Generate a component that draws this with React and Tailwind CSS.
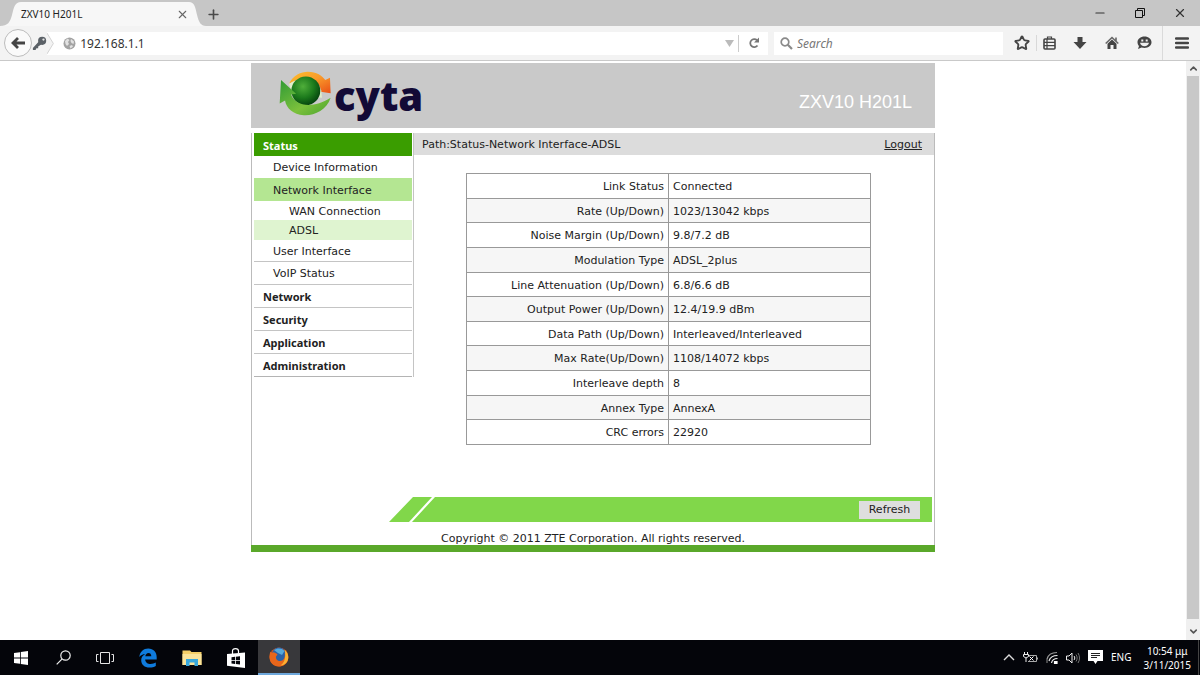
import { ChevronDown, ChevronUp, Minus, Plus, Search, Star, X } from 'lucide-react'
import { useState } from 'react'

const menu = [
  { label: 'Status', className: "h-[23px] bg-[#3a9d00] pl-[9px] font-['Noto_Sans'] font-bold text-white" },
  { label: 'Device Information', className: 'h-[22px] pl-[19px]' },
  { label: 'Network Interface', className: 'h-[23px] bg-[#b4e692] pl-[19px]' },
  { label: 'WAN Connection', className: 'h-[19px] pl-[35px]' },
  { label: 'ADSL', className: 'h-5 bg-[#dff4d0] pl-[35px]' },
  { label: 'User Interface', className: 'h-[22px] border-b border-[#c4c4c4] pl-[19px]' },
  { label: 'VoIP Status', className: 'h-[23px] border-b border-[#c4c4c4] pl-[19px]' },
  { label: 'Network', className: "h-[23px] border-b border-[#c4c4c4] pl-[9px] font-['Noto_Sans'] font-bold" },
  { label: 'Security', className: "h-[23px] border-b border-[#c4c4c4] pl-[9px] font-['Noto_Sans'] font-bold" },
  { label: 'Application', className: "h-[23px] border-b border-[#c4c4c4] pl-[9px] font-['Noto_Sans'] font-bold" },
  { label: 'Administration', className: "h-[23px] border-b border-[#b4b4b4] pl-[9px] font-['Noto_Sans'] font-bold" },
]

const stats = [
  ['Link Status', 'Connected'],
  ['Rate (Up/Down)', '1023/13042 kbps'],
  ['Noise Margin (Up/Down)', '9.8/7.2 dB'],
  ['Modulation Type', 'ADSL_2plus'],
  ['Line Attenuation (Up/Down)', '6.8/6.6 dB'],
  ['Output Power (Up/Down)', '12.4/19.9 dBm'],
  ['Data Path (Up/Down)', 'Interleaved/Interleaved'],
  ['Max Rate(Up/Down)', '1108/14072 kbps'],
  ['Interleave depth', '8'],
  ['Annex Type', 'AnnexA'],
  ['CRC errors', '22920'],
]

function TabBar() {
  return (
    <header className="flex h-[26px] items-end bg-[#c6c6c6] text-[#333]">
      <div className="flex h-6 items-end">
        <svg width="21" height="24" viewBox="0 0 21 24" fill="#f7f7f7">
          <path d="M0 24C8 24 10 20 12 13C14 5 15 0 21 0V24Z" />
        </svg>
        <div className="flex h-6 w-[168px] items-center justify-between bg-[#f7f7f7]">
          <span className="text-[10px] text-[#222]">ZXV10 H201L</span>
          <button type="button" aria-label="Close tab">
            <X size={13} strokeWidth={2} className="text-[#666]" />
          </button>
        </div>
        <svg width="17" height="24" viewBox="0 0 19 24" fill="#f7f7f7" preserveAspectRatio="none">
          <path d="M0 0C6 0 7 5 9 13C11 20 13 24 19 24H0Z" />
        </svg>
      </div>
      <button type="button" aria-label="New tab" className="flex h-6 items-center">
        <Plus size={15} strokeWidth={2.6} className="text-[#4a4a4a]" />
      </button>
      <div className="ml-auto flex h-[26px] items-center">
        <button type="button" aria-label="Minimize" className="flex w-10 justify-center">
          <Minus size={14} strokeWidth={2} />
        </button>
        <button type="button" aria-label="Restore" className="flex w-10 justify-center">
          <svg width="10" height="10" viewBox="0 0 10 10" fill="none" stroke="#111">
            <path d="M.5 2.5h7v7h-7zM2.5 2.5v-2h7v7h-2" />
          </svg>
        </button>
        <button type="button" aria-label="Close window" className="flex w-10 justify-center">
          <X size={14} strokeWidth={2} />
        </button>
      </div>
    </header>
  )
}

function KeyIcon() {
  return (
    <svg width="15" height="17" viewBox="0 0 17 17">
      <path d="M7.500 6.500L1 13.500V16H4L5 14H7V12L10.500 9.500Z" fill="#5b6167" />
      <ellipse cx="11.500" cy="5.500" rx="4.600" ry="4.600" fill="#5b6167" />
      <circle cx="13" cy="4" r="1.300" fill="#e5e5e5" />
    </svg>
  )
}

function GlobeIcon() {
  return (
    <svg width="13" height="13" viewBox="0 0 13 13">
      <circle cx="6.500" cy="6.500" r="6" fill="#a3a3a3" />
      <path
        d="M2 4L4.500 1.500L6.500 3L5 5L6 7L4 9L2.500 7ZM8 2L11 4.500L10.500 7L8.500 6L7.500 4ZM6.500 9L9 8L10 9.500L7.500 11.500Z"
        fill="#e2e2e2"
      />
    </svg>
  )
}

function ToolBar() {
  const [url, setUrl] = useState('192.168.1.1')
  const [query, setQuery] = useState('')

  return (
    <div className="flex h-[35px] items-center border-b border-[#c9c9c9] bg-[#f3f3f3] pl-1 text-[#444]">
      <button
        type="button"
        aria-label="Back"
        className="z-10 flex h-7 w-7 items-center justify-center rounded-full border border-[#bcbcbc] bg-[#fafafa]"
      >
        <svg width="14" height="12" viewBox="0 0 14 12" fill="none" stroke="#444" strokeWidth="2.800">
          <path d="M7 1L2 6L7 11M2 6H14" />
        </svg>
      </button>
      <div className="-ml-2 flex h-[23px] flex-1 items-center bg-white">
        <div className="flex h-full items-center bg-[#f3f3f3] pl-2">
          <KeyIcon />
        </div>
        <svg width="9" height="23" viewBox="0 0 9 23" fill="#f3f3f3" stroke="#cfcfcf">
          <path d="M0 0L7 11.500L0 23" />
        </svg>
        <div className="ml-1 flex w-full min-w-0 items-center gap-1 pl-1">
          <GlobeIcon />
          <input
            aria-label="Address"
            className="min-w-0 flex-1 bg-transparent pt-px text-xs text-[#333] outline-none"
            value={url}
            onChange={(e) => setUrl(e.target.value)}
          />
          <button type="button" aria-label="Show history">
            <svg width="9" height="7" viewBox="0 0 9 7" fill="#bbb">
              <path d="M0 0H9L4.500 7Z" />
            </svg>
          </button>
        </div>
        <button
          type="button"
          aria-label="Reload"
          className="ml-1 flex h-[17px] w-[30px] shrink-0 items-center justify-center border-l border-[#ccc]"
        >
          <svg width="12" height="12" viewBox="0 0 12 12">
            <path d="M9.500 8.500A4 4 0 1 1 9 3.200" fill="none" stroke="#777" strokeWidth="1.800" />
            <path d="M11 .5V5.500H6Z" fill="#777" />
          </svg>
        </button>
      </div>
      <label className="ml-[6px] flex h-[23px] w-[229px] items-center gap-1 bg-white pl-[6px]">
        <svg width="13" height="13" viewBox="0 0 13 13" fill="none" stroke="#8a8a8a" className="shrink-0">
          <circle cx="5" cy="5" r="3.800" strokeWidth="1.700" />
          <path d="M7.800 7.800L12 12" strokeWidth="2.200" />
        </svg>
        <input
          aria-label="Search"
          className="w-full bg-transparent pt-px text-xs italic outline-none placeholder:text-[#777]"
          placeholder="Search"
          value={query}
          onChange={(e) => setQuery(e.target.value)}
        />
      </label>
      <div className="flex h-full items-center pl-[11px]">
        <button type="button" aria-label="Bookmark" className="flex w-[23px] border-r border-[#d8d8d8]">
          <Star size={16} strokeWidth={2.800} />
        </button>
        <button type="button" aria-label="Bookmarks list" className="flex w-[27px] pl-[6px]">
          <svg width="13" height="14" viewBox="0 0 13 14" fill="none" stroke="#444" strokeWidth="1.600">
            <rect x="1" y="3" width="11" height="10" rx="1" />
            <path d="M4.500 3V1H8.500V3M1 6.400H12M1 9.600H12M4 3V13" strokeWidth="1.200" />
          </svg>
        </button>
        <button type="button" aria-label="Downloads" className="flex w-8 justify-center">
          <svg width="14" height="14" viewBox="0 0 14 14" fill="#444">
            <path d="M4.500 1H9.500V6H13.500L7 13L.5 6H4.500Z" />
          </svg>
        </button>
        <button type="button" aria-label="Home" className="flex w-8 justify-center">
          <svg width="14" height="14" viewBox="0 0 14 14">
            <path d="M.7 7.500L7 1.500L13.300 7.500M11 1.500V5" fill="none" stroke="#666" strokeWidth="1.600" />
            <path d="M2.500 7.800L7 3.600L11.500 7.800V13H8.500V9H5.500V13H2.500Z" fill="#444" />
          </svg>
        </button>
        <button type="button" aria-label="Chat" className="flex w-8 justify-center">
          <svg width="15" height="14" viewBox="0 0 15 14">
            <path d="M7.500 .5C11.500 .5 14.500 3 14.500 6.300S11.500 12 7.500 12C6.500 12 5.500 11.800 4.600 11.500L1 13L2 10C1 9 .5 7.700 .5 6.300C.5 3 3.500 .5 7.500 .5Z" fill="#444" />
            <path d="M4.300 3.400H6.300V5.400H4.300ZM8.700 3.400H10.700V5.400H8.700ZM3 6.800H12C11.500 9 9.800 10.200 7.500 10.200S3.500 9 3 6.800Z" fill="#eee" />
          </svg>
        </button>
        <button
          type="button"
          aria-label="Open menu"
          className="ml-[2px] flex h-full w-[38px] items-center justify-center border-l border-[#dadada]"
        >
          <svg width="14" height="12" viewBox="0 0 14 12" stroke="#444" strokeWidth="2.400" strokeLinecap="round">
            <path d="M1 1.500H13M1 6H13M1 10.500H13" />
          </svg>
        </button>
      </div>
    </div>
  )
}

function CytaLogo() {
  return (
    <div className="flex items-center">
      <svg width="57" height="47" viewBox="80 25 170 140" className="-mt-1">
        <defs>
          <radialGradient id="ball" cx="0.4" cy="0.35" r="0.65">
            <stop offset="0" stopColor="#4fae3a" />
            <stop offset="0.6" stopColor="#1c7a1c" />
            <stop offset="1" stopColor="#07480f" />
          </radialGradient>
          <linearGradient id="leaf" x1="0" y1="0" x2="1" y2="1">
            <stop offset="0" stopColor="#2f9a35" />
            <stop offset="0.6" stopColor="#7cc13c" />
            <stop offset="1" stopColor="#4aa32f" />
          </linearGradient>
          <linearGradient id="flame" x1="0" y1="0" x2="1" y2="1">
            <stop offset="0" stopColor="#fbc02d" />
            <stop offset="0.5" stopColor="#f99a2a" />
            <stop offset="1" stopColor="#ea4f16" />
          </linearGradient>
        </defs>
        <path d="M116 66C128 40 152 30 172 30C198 30 215 42 224 55L238 48L240 94L200 88L210 80C200 50 165 38 116 66Z" fill="url(#flame)" />
        <path d="M116 66C150 42 195 48 212 86L214 108L125 100Z" fill="#dfeecb" />
        <circle cx="166" cy="87" r="43" fill="url(#ball)" />
        <path d="M92 55L137 96L122 98C132 128 180 146 240 108C228 145 190 162 160 160C128 157 108 140 104 116L88 125Z" fill="url(#leaf)" />
      </svg>
      <span className="font-['Open_Sans'] text-[40px] leading-none font-extrabold text-[#120a36]">cyta</span>
    </div>
  )
}

function RouterPage() {
  return (
    <div className="mx-auto mt-[2px] w-[684px] font-['DejaVu_Sans',sans-serif] text-[11px] text-[#222]">
      <div className="flex h-[65px] items-center justify-between bg-[#c9c9c9] pr-[23px] pl-[26px]">
        <CytaLogo />
        <h1 className="pt-3 font-['Liberation_Sans',sans-serif] text-lg text-white">ZXV10 H201L</h1>
      </div>

      <div className="mt-[5px] border-x border-[#bbb]">
        <div className="flex items-start">
          <nav className="ml-[2px] w-40 border-r border-[#c4c4c4] pr-px">
            {menu.map((item) => (
              <a key={item.label} href="#" className={`flex items-center pt-[3px] ${item.className}`}>
                {item.label}
              </a>
            ))}
          </nav>

          <main className="flex-1">
            <div className="flex h-[22px] items-center justify-between bg-[#dcdcdc] pt-[2px] pr-3 pl-2">
              <span>Path:Status-Network Interface-ADSL</span>
              <a href="#" className="underline">
                Logout
              </a>
            </div>
            <table className="mt-[18px] ml-[52px] h-[272px] w-[405px] border-collapse">
              <tbody>
                {stats.map(([name, value]) => (
                  <tr key={name} className="even:bg-[#f6f6f6]">
                    <th className="w-1/2 border border-[#999] px-1 pt-[3px] pb-0 text-right font-normal" scope="row">
                      {name}
                    </th>
                    <td className="border border-[#999] px-1 pt-[3px] pb-0">{value}</td>
                  </tr>
                ))}
              </tbody>
            </table>
          </main>
        </div>

        <div className="mt-[52px] mr-[2px] ml-[137px] flex h-[25px]">
          <svg width="46" height="25" viewBox="0 0 46 25" fill="#81d74a">
            <path d="M24 0H43L20 25H0ZM46 0V25H23Z" />
          </svg>
          <div className="flex flex-1 items-center justify-end bg-[#81d74a] pr-3">
            <button type="button" className="flex h-[18px] w-[61px] items-center justify-center bg-[#dedede] pt-px">
              Refresh
            </button>
          </div>
        </div>

        <footer className="flex h-[23px] items-end justify-center leading-3">
          Copyright © 2011 ZTE Corporation. All rights reserved.
        </footer>
      </div>
      <div className="h-[7px] bg-[#5aa82a]" />
    </div>
  )
}

function ScrollBar() {
  return (
    <div className="flex w-[14px] flex-col items-center bg-[#f0f0f0] text-[#555]">
      <button type="button" aria-label="Scroll up" className="flex h-[15px] items-center">
        <ChevronUp size={11} strokeWidth={3.500} />
      </button>
      <div className="w-3 flex-1 bg-[#c8c8c8]" />
      <button type="button" aria-label="Scroll down" className="flex h-[21px] items-center pt-1">
        <ChevronDown size={11} strokeWidth={3.500} />
      </button>
    </div>
  )
}

function TaskBar() {
  return (
    <footer className="flex h-[35px] bg-[#04050a] text-[10px] text-white">
      <button type="button" aria-label="Start" className="flex w-[42px] items-center justify-center">
        <svg width="14" height="14" viewBox="0 0 14 14" fill="#fff">
          <path d="M0 2L6 1.200V6.600H0ZM6.800 1.100L14 0V6.600H6.800ZM0 7.400H6V12.800L0 12ZM6.800 7.400H14V14L6.800 12.900Z" />
        </svg>
      </button>
      <button type="button" aria-label="Search" className="flex w-[42px] items-center justify-center">
        <svg width="15" height="15" viewBox="0 0 15 15" fill="none" stroke="#eee" strokeWidth="1.200">
          <circle cx="9.500" cy="5.500" r="4.700" />
          <path d="M6.200 8.800L.7 14.300" />
        </svg>
      </button>
      <button type="button" aria-label="Task view" className="flex w-[42px] items-center justify-center">
        <svg width="18" height="12" viewBox="0 0 18 12" fill="none" stroke="#e5e5e5">
          <path d="M4.500 .5H13.500V11.500H4.500ZM2.500 2.500H.5V9.500H2.500M15.500 2.500H17.500V9.500H15.500" />
        </svg>
      </button>
      <button type="button" aria-label="Edge" className="flex w-11 items-center justify-center">
        <svg width="18" height="20" viewBox="0 0 18 20" fill="#0f7bdc">
          <path d="M.3 9C1 3.500 4.500 .5 9.200 .5C14.500 .5 17.700 4.200 17.700 9.200V11.500H6.200C6.400 14.800 8.800 16 11.600 16C13.600 16 15.400 15.400 16.800 14.600V18C15 19 13 19.500 10.600 19.500C5.500 19.500 2.200 16.600 2.200 12.200C2.200 9.500 3.700 7.300 6.200 6C3.800 6.300 1.700 7.200 .3 9ZM6.300 8.300H12.300C12.300 6.200 11.200 5 9.500 5C7.800 5 6.600 6.300 6.300 8.300Z" />
        </svg>
      </button>
      <button type="button" aria-label="File Explorer" className="flex w-11 items-center justify-center">
        <svg width="20" height="18" viewBox="0 0 20 18">
          <path d="M.5 1.500H8L9.500 3H19.500V16H.5Z" fill="#f5cf68" />
          <path d="M.5 5H19.500V16H.5Z" fill="#fbe49a" />
          <path d="M4 10H16V17H12.500V13.500H7.500V17H4Z" fill="#39a8dc" />
        </svg>
      </button>
      <button type="button" aria-label="Store" className="flex w-11 items-center justify-center">
        <svg width="18" height="20" viewBox="0 0 18 20">
          <path d="M5.500 6V3C5.500 1.500 6.500 .7 8.500 .7S11.500 1.500 11.500 3V5" fill="none" stroke="#fff" strokeWidth="1.200" />
          <path d="M0 6L18 4.500V20L0 17.800Z" fill="#fff" />
          <path d="M4.500 9.200L8 8.800V12H4.500ZM8.800 8.700L13 8.200V12H8.800ZM4.500 12.800H8V16L4.500 15.600ZM8.800 12.800H13V16.600L8.800 16.100Z" fill="#04050a" />
        </svg>
      </button>
      <button
        type="button"
        aria-label="Firefox"
        className="flex w-[42px] items-center justify-center border-b-2 border-[#6ea8dc] bg-[#38383b]"
      >
        <svg width="20" height="20" viewBox="0 0 20 20">
          <circle cx="10" cy="10" r="9.500" fill="#d9541a" />
          <circle cx="10" cy="7.800" r="7.200" fill="#2b62a8" />
          <path d="M5 3C8 .8 13 .8 15.500 4L13 8L9 6Z" fill="#55a9dc" />
          <path d="M1.500 4.500L2.500 6L4.500 5.300C5.500 5.800 7 6 8.500 7.500L7 9.500C6.500 12 8.500 14 11 14C14.500 14 16.500 11 15.800 5.500C18 7.500 19.500 10 18.800 13C17.500 17.500 13.500 19.500 10 19.500C4.500 19.500 .5 15.500 .5 10C.5 8 .8 6 1.500 4.500Z" fill="#e8661b" />
          <path d="M15.500 2.800C19.500 5.500 20.500 11.500 17.500 15.500C16 17.500 13.500 18.500 11.500 18.500C15.500 16 17.500 10 15.500 2.800Z" fill="#f9b233" />
        </svg>
      </button>

      <div className="ml-auto flex items-center gap-2 pr-[7px]">
        <button type="button" aria-label="Show hidden icons" className="flex">
          <svg width="12" height="7" viewBox="0 0 12 7" fill="none" stroke="#ddd" strokeWidth="1.400">
            <path d="M1 6L6 1L11 6" />
          </svg>
        </button>
        <button type="button" aria-label="Battery" className="flex">
          <svg width="15" height="12" viewBox="0 0 15 12" fill="none" stroke="#aaa">
            <path d="M6 3.500H13.500V9.500H5M14.500 5.500V7.500" />
            <path d="M6.500 4.500L10.500 8.500M10.500 4.500L6.500 8.500" stroke="#fff" />
            <path d="M1.500 0V2M4.500 0V2M.5 2.500H5.500V4.500L3 6L.5 4.500ZM3 6V10" stroke="#eee" />
          </svg>
        </button>
        <button type="button" aria-label="Wireless network" className="flex">
          <svg width="12" height="13" viewBox="0 0 12 13" fill="none" strokeWidth="1.200">
            <path d="M1 8C2 4 5 1.500 11 1.500" stroke="#999" />
            <path d="M3 10C4 6.500 6.500 4.500 11.500 4.500M5.500 12C6 9.500 8 7.500 11.500 7.500" stroke="#eee" />
            <path d="M8.500 12.500V10.500H11V12.500Z" fill="#fff" stroke="#fff" />
            <path d="M1 8V12" stroke="#777" />
          </svg>
        </button>
        <button type="button" aria-label="Volume" className="flex">
          <svg width="14" height="12" viewBox="0 0 14 12" fill="none" stroke="#eee">
            <path d="M.5 4H3L6 1V11L3 8H.5Z" />
            <path d="M8 4C9 5 9 7 8 8" />
            <path d="M10 2.500C11.500 4.500 11.500 7.500 10 9.500M12 1C14 4 14 8 12 11" stroke="#777" />
          </svg>
        </button>
        <button type="button" aria-label="Notifications" className="flex">
          <svg width="15" height="15" viewBox="0 0 15 15">
            <path d="M0 0H15V11H9.500L7.500 14L5.500 11H0Z" fill="#fff" />
            <path d="M3 3.500H12M3 5.500H12M3 7.500H9" stroke="#222" />
          </svg>
        </button>
        <span className="pr-1">ENG</span>
        <time className="text-center leading-[14px]">
          10:54 μμ
          <br />
          3/11/2015
        </time>
      </div>
      <div className="w-[2px] border-l border-[#444]" />
    </footer>
  )
}

export default function App() {
  return (
    <div className="flex min-h-screen flex-col bg-white font-['Noto_Sans',sans-serif]">
      <TabBar />
      <ToolBar />
      <div className="flex flex-1">
        <div className="flex-1">
          <RouterPage />
        </div>
        <ScrollBar />
      </div>
      <TaskBar />
    </div>
  )
}
